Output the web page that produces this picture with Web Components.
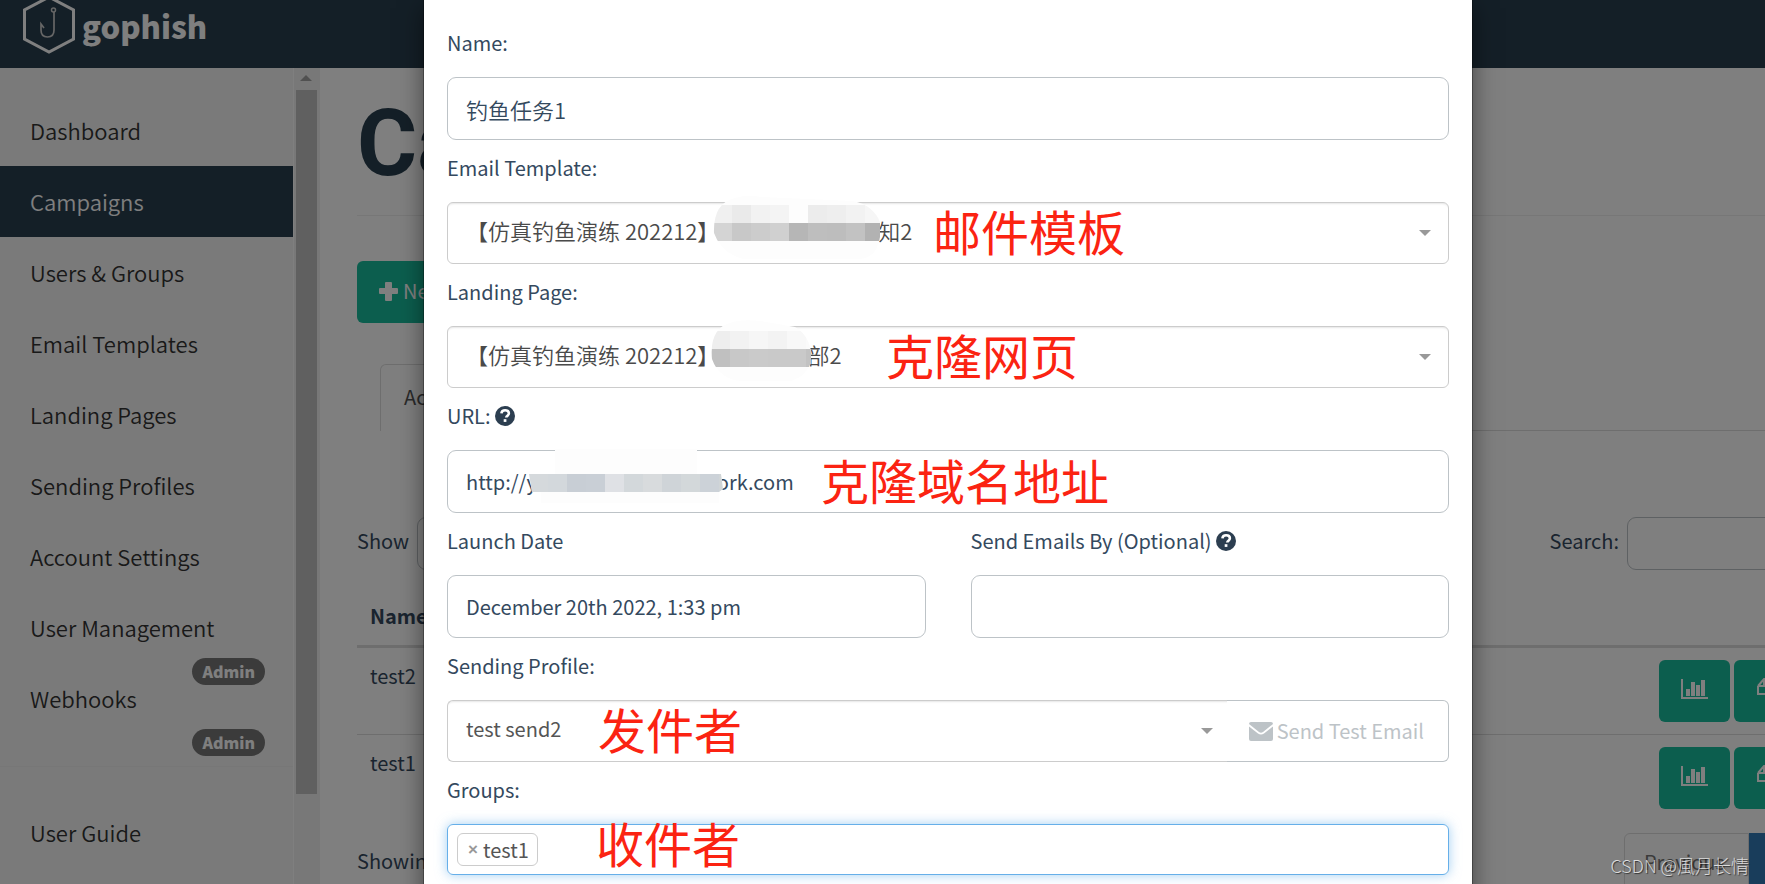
<!DOCTYPE html>
<html lang="en">
<head>
<meta charset="utf-8">
<title>Campaigns - Gophish</title>
<style>
  * {
    box-sizing: border-box;
  }
  body {
    margin: 0;
    overflow: hidden;
    height: 100vh;
    background: #fff;
    color: #34495e;
    font: 20px/32px "Noto Sans CJK SC", "Source Sans Pro", sans-serif;
    --page: calc(100vw + 131px);
  }
</style>
</head>
<body>
<gp-navbar></gp-navbar>
<gp-layout>
  <gp-sidebar slot="side"></gp-sidebar>
  <gp-campaigns></gp-campaigns>
</gp-layout>
<gp-modal>
  <gp-input label="Name:" value="钓鱼任务1" cjk></gp-input>
  <gp-select label="Email Template:" cjk value="【仿真钓鱼演练 202212】&#x3000;&#x3000;&#x3000;&#x3000;&#x3000;&#x3000;&#x3000;&#x2002; 知2">
    <gp-mosaic kind="template" style="left:266px"></gp-mosaic>
    <gp-note style="left:486px">邮件模板</gp-note>
  </gp-select>
  <gp-select label="Landing Page:" cjk value="【仿真钓鱼演练 202212】&#x3000;&#x3000;&#x3000;&#x3000;&#x2002;部2">
    <gp-mosaic kind="page" style="left:264px"></gp-mosaic>
    <gp-note style="left:439px">克隆网页</gp-note>
  </gp-select>
  <gp-input label="URL:" help value="http://y&#x3000;&#x3000;&#x3000;&#x3000;&#x3000;&#x3000;&#x3000;&#x3000;&#x3000;ork.com">
    <gp-mosaic kind="url" style="left:82px"></gp-mosaic>
    <gp-note style="left:374px">克隆域名地址</gp-note>
  </gp-input>
  <gp-columns>
    <gp-input label="Launch Date" value="December 20th 2022, 1:33 pm"></gp-input>
    <gp-input label="Send Emails By (Optional)" help value=""></gp-input>
  </gp-columns>
  <gp-select label="Sending Profile:" value="test send2" joined>
    <gp-test-button slot="after"></gp-test-button>
    <gp-note style="left:151px">发件者</gp-note>
  </gp-select>
  <gp-tags label="Groups:" value="test1">
    <gp-note style="left:149px">收件者</gp-note>
  </gp-tags>
</gp-modal>
<gp-watermark>CSDN @風月长情</gp-watermark>

<script>
  const icons = {
    help: `<svg width="20" height="20" viewBox="0 0 20 20" aria-hidden="true"><circle cx="10" cy="10" r="10" fill="#2c3e50"/><path d="M6.4 7.4C6.6 5.2 8.1 4.2 10.1 4.2c2.1 0 3.8 1.2 3.8 3.1 0 2.4-2.6 2.4-2.6 4.2" fill="none" stroke="#fff" stroke-width="2.6"/><rect x="8.7" y="13.2" width="2.7" height="2.7" fill="#fff"/></svg>`,
    plus: `<svg width="19" height="19" viewBox="0 0 19 19" aria-hidden="true"><path d="M7 0h5q1 0 1 1v5h5q1 0 1 1v4q0 1-1 1h-5v6q0 1-1 1H7q-1 0-1-1v-6H1q-1 0-1-1V7q0-1 1-1h5V1q0-1 1-1z" fill="currentColor"/></svg>`,
    chart: `<svg width="27" height="20" viewBox="0 0 27 20" aria-hidden="true"><path d="M0 0h2v18h25v2H0zM5 10h4v7H5zM10 3h4v14h-4zM15 6h4v11h-4zM20 1h4v16h-4z" fill="currentColor"/></svg>`,
    copy: `<svg width="25" height="23" viewBox="0 0 25 23" aria-hidden="true"><path d="M1 9l6-7h8v6M1 9v8h8M1 9h6V2M10 13l5-5h9v14H10zM10 14h5V8" fill="none" stroke="currentColor" stroke-width="2"/></svg>`,
    trash: `<svg width="19" height="21" viewBox="0 0 19 21" aria-hidden="true"><path d="M0 4h19M6 4V1h7v3M3 4v16h13V4M7 8v8M12 8v8" fill="none" stroke="currentColor" stroke-width="2"/></svg>`,
    mail: `<svg width="24" height="19" viewBox="0 0 24 19" aria-hidden="true"><path d="M2 0h20q2 0 2 2L14 10q-2 1.500-4 0L0 2q0-2 2-2zM0 4.500l9 7q3 2 6 0l9-7V17q0 2-2 2H2q-2 0-2-2z" fill="currentColor"/></svg>`
  };

  // attach an open root and fill it
  class Base extends HTMLElement {
    render(css, html) {
      const template = document.createElement('template');
      template.innerHTML = `<style>*{box-sizing:border-box}${css}</style>${html}`;
      this.attachShadow({ mode: 'open' }).appendChild(template.content.cloneNode(true));
    }
  }

  customElements.define('gp-navbar', class extends Base {
    connectedCallback() {
      this.render(`
        :host {
          display: flex;
          height: 68px;
          background: #293f4f;
        }
        a {
          display: flex;
          align-items: flex-start;
          gap: 7px;
          padding-left: 23px;
          color: #fff;
          text-decoration: none;
          font-weight: 900;
          font-size: 31px;
          line-height: 52px;
        }
      `, `
        <a href="#">
          <svg width="52" height="54" viewBox="0 0 52 54" aria-hidden="true">
            <path d="M26-3L50.500 10v29L26 52 1.500 39V10z" fill="none" stroke="#fff" stroke-width="3"/>
            <circle cx="30.500" cy="10" r="2" fill="none" stroke="#ccc" stroke-width="1.500"/>
            <path d="M31 12v18q0 7-6.500 7T18 30v-6l3 4" fill="none" stroke="#ccc" stroke-width="1.700"/>
          </svg>
          gophish
        </a>
      `);
    }
  });

  customElements.define('gp-layout', class extends Base {
    connectedCallback() {
      this.render(`
        :host {
          display: flex;
          width: var(--page);
          height: calc(100vh - 68px);
        }
      `, `<slot name="side"></slot><slot></slot>`);
    }
  });

  customElements.define('gp-sidebar', class extends Base {
    connectedCallback() {
      const items = ['Dashboard', 'Campaigns', 'Users & Groups', 'Email Templates', 'Landing Pages',
        'Sending Profiles', 'Account Settings', 'User Management', 'Webhooks'];
      const links = items.map(item => {
        const admin = item === 'User Management' || item === 'Webhooks';
        return `<li${item === 'Campaigns' ? ' class="active"' : ''}><a href="#">${item.replace('&', '&amp;')}</a>${admin ? '<span class="badge">Admin</span>' : ''}</li>`;
      }).join('');
      this.render(`
        :host {
          display: flex;
          flex: none;
          width: 320px;
          background: #f5f5f5;
        }
        nav {
          width: 293px;
          padding-top: 27px;
        }
        ul {
          list-style: none;
          margin: 0;
          padding: 0;
        }
        li {
          position: relative;
        }
        a {
          display: block;
          padding: 19px 30px 20px;
          color: #333;
          font-size: 22px;
          font-weight: 350;
          text-decoration: none;
        }
        .active a {
          background: #293f4f;
          color: #fff;
        }
        .badge {
          position: absolute;
          right: 28px;
          top: 66px;
          padding: 0 10px;
          border-radius: 15px;
          background: #777;
          color: #fff;
          font-size: 16px;
          line-height: 27px;
          font-weight: 900;
        }
        .more {
          margin-top: 32px;
          padding-top: 30px;
          border-top: 1px solid #eee;
        }
        .bar {
          display: flex;
          flex-direction: column;
          align-items: center;
          width: 27px;
          border-left: 1px solid #fff;
          background: #f1f1f1;
          padding: 7px 2px 0 0;
        }
        .up {
          border: 6px solid transparent;
          border-top: 0;
          border-bottom-color: #a3a3a3;
        }
        .thumb {
          width: 21px;
          height: 704px;
          margin-top: 9px;
          background: #c1c1c1;
        }
      `, `
        <nav>
          <ul>${links}</ul>
          <ul class="more"><li><a href="#">User Guide</a></li></ul>
        </nav>
        <div class="bar"><div class="up"></div><div class="thumb"></div></div>
      `);
    }
  });

  customElements.define('gp-campaigns', class extends Base {
    connectedCallback() {
      const row = name => `
        <tr>
          <td>${name}</td>
          <td><div class="actions">
            <button aria-label="View results">${icons.chart}</button>
            <button aria-label="Copy">${icons.copy}</button>
            <button class="danger" aria-label="Delete">${icons.trash}</button>
          </div></td>
        </tr>`;
      this.render(`
        :host {
          display: block;
          flex: 1;
          padding: 0 4px 0 37px;
        }
        h1 {
          margin: 0;
          padding: 21px 0 17px;
          border-bottom: 1px solid #eee;
          color: #293f4f;
          font: 700 92px/109px Roboto, sans-serif;
        }
        button {
          display: flex;
          align-items: center;
          justify-content: center;
          gap: 5px;
          height: 62px;
          border: 0;
          border-radius: 6px;
          background: #18bc9c;
          color: #fff;
          font: inherit;
        }
        .new {
          margin: 45px 0 41px;
          padding: 0 22px 2px;
        }
        .tabs {
          display: flex;
          height: 67px;
          margin-left: 23px;
          border-bottom: 1px solid #ddd;
        }
        .tabs a {
          height: 67px;
          padding: 16px 23px;
          border: 1px solid #ddd;
          border-bottom: 0;
          border-radius: 6px 6px 0 0;
          background: #fff;
          color: #555;
          text-decoration: none;
        }
        .tools {
          display: flex;
          justify-content: space-between;
          margin-top: 86px;
        }
        .tools label {
          display: flex;
          align-items: flex-start;
          gap: 8px;
          line-height: 48px;
        }
        .tools select,
        .tools input {
          height: 53px;
          border: 1px solid #bdc3c7;
          border-radius: 9px;
          background: #fff;
          font: inherit;
        }
        .tools select {
          width: 110px;
          padding: 0 12px;
        }
        .tools input {
          width: 265px;
        }
        table {
          width: 100%;
          margin-top: 17px;
          border-collapse: collapse;
        }
        th {
          height: 59px;
          padding: 12px 13px;
          border-bottom: 3px solid #ddd;
          text-align: left;
        }
        td {
          padding: 12px 12px 12px 13px;
          vertical-align: top;
          border-bottom: 1px solid #ddd;
        }
        tr:last-child td {
          border-bottom: 0;
        }
        .actions {
          display: flex;
          justify-content: flex-end;
          gap: 4px;
        }
        .actions button {
          width: 71px;
          padding: 0 0 4px;
        }
        .actions .danger {
          background: #e74c3c;
        }
        .foot {
          display: flex;
          justify-content: space-between;
          padding-top: 12px;
        }
        .foot p {
          margin: 12px 0;
        }
        .pages {
          display: flex;
        }
        .pages a {
          height: 60px;
          padding: 12px 19px;
          border: 1px solid #ddd;
          color: #777;
          text-decoration: none;
        }
        .pages a:first-child {
          width: 125px;
          border-radius: 6px 0 0 6px;
        }
        .pages .on {
          background: #337ab7;
          border-color: #337ab7;
          color: #fff;
        }
        .pages a:last-child {
          width: 92px;
        }
      `, `
        <h1>Campaigns</h1>
        <button class="new">${icons.plus} New Campaign</button>
        <div class="tabs"><a href="#">Active Campaigns</a></div>
        <div class="tools">
          <label>Show <select><option>10</option></select></label>
          <label>Search: <input type="search"></label>
        </div>
        <table>
          <thead><tr><th>Name</th><th></th></tr></thead>
          <tbody>${row('test2')}${row('test1')}</tbody>
        </table>
        <div class="foot">
          <p>Showing 1 to 2 of 2 entries</p>
          <div class="pages"><a href="#">Previous</a><a href="#" class="on">1</a><a href="#">Next</a></div>
        </div>
      `);
    }
  });

  customElements.define('gp-modal', class extends Base {
    connectedCallback() {
      this.render(`
        :host {
          position: absolute;
          top: 0;
          left: 0;
          width: var(--page);
          height: 100vh;
          overflow: hidden;
          background: rgba(0, 0, 0, .5);
        }
        .dialog {
          width: 1048px;
          min-height: 100vh;
          margin: 0 auto;
          padding: 15px 23px 40px;
          background: #fff;
          box-shadow: 0 0 0 1px rgba(0, 0, 0, .3), 0 8px 23px rgba(0, 0, 0, .5);
        }
      `, `<div class="dialog" role="dialog" aria-label="New Campaign"><slot></slot></div>`);
    }
  });

  customElements.define('gp-columns', class extends Base {
    connectedCallback() {
      this.render(`
        :host {
          display: grid;
          grid-template-columns: 1fr 1fr;
          gap: 45px;
        }
      `, `<slot></slot>`);
    }
  });

  const fieldStyle = `
    :host {
      display: block;
    }
    label {
      display: flex;
      align-items: center;
      gap: 4px;
      padding: 12px 0 18px;
    }
    .box {
      display: flex;
      position: relative;
    }
  `;

  class Field extends Base {
    label() {
      const help = this.hasAttribute('help') ? icons.help : '';
      return `<label for="control">${this.getAttribute('label')}${help}</label>`;
    }
  }

  customElements.define('gp-input', class extends Field {
    connectedCallback() {
      this.render(`${fieldStyle}
        input {
          flex: 1;
          min-width: 0;
          height: 63px;
          padding: 0 18px;
          border: 1px solid #bdc3c7;
          border-radius: 9px;
          background: #fff;
          color: #34495e;
          font: inherit;
        }
        :host([cjk]) input {
          font-size: 22px;
          font-weight: 350;
        }
      `, `
        ${this.label()}
        <div class="box"><input id="control" type="text" value="${this.getAttribute('value')}"><slot></slot></div>
      `);
    }
  });

  customElements.define('gp-select', class extends Field {
    connectedCallback() {
      this.render(`${fieldStyle}
        .pick {
          display: grid;
          flex: 1;
          align-items: center;
        }
        select,
        .caret {
          grid-area: 1 / 1;
        }
        select {
          appearance: none;
          height: 62px;
          padding: 0 18px 4px;
          border: 1px solid #ccc;
          border-radius: 6px;
          background: #fff;
          box-shadow: inset 0 3px 2px -2px rgba(0, 0, 0, .1);
          color: #555;
          font: inherit;
        }
        :host([cjk]) select {
          padding-bottom: 6px;
          color: #4a4a4a;
          font-size: 22px;
          font-weight: 350;
        }
        :host([joined]) select {
          border-right: 0;
          border-radius: 6px 0 0 6px;
        }
        .caret {
          justify-self: end;
          margin-right: 18px;
          border: 6px solid transparent;
          border-top-color: #999;
          border-bottom: 0;
          pointer-events: none;
        }
        :host([joined]) .caret {
          margin-right: 14px;
        }
      `, `
        ${this.label()}
        <div class="box">
          <div class="pick">
            <select id="control"><option>${this.getAttribute('value')}</option></select>
            <span class="caret"></span>
          </div>
          <slot name="after"></slot>
          <slot></slot>
        </div>
      `);
    }
  });

  customElements.define('gp-test-button', class extends Base {
    connectedCallback() {
      this.render(`
        :host {
          display: block;
        }
        button {
          display: flex;
          align-items: center;
          gap: 4px;
          height: 62px;
          padding: 0 24px 0 22px;
          border: 1px solid #bdc3c7;
          border-left: 0;
          border-radius: 0 6px 6px 0;
          background: #fff;
          color: #bdc3c7;
          font: inherit;
        }
      `, `<button disabled>${icons.mail} Send Test Email</button>`);
    }
  });

  customElements.define('gp-tags', class extends Field {
    connectedCallback() {
      this.render(`${fieldStyle}
        .tags {
          display: flex;
          flex: 1;
          align-items: center;
          gap: 8px;
          height: 51px;
          padding: 0 9px;
          border: 1px solid #66afe9;
          border-radius: 6px;
          box-shadow: 0 0 12px rgba(102, 175, 233, .6);
        }
        .tag {
          display: flex;
          align-items: center;
          gap: 5px;
          height: 33px;
          padding: 0 8px 0 10px;
          border: 1px solid #ccc;
          border-radius: 6px;
          color: #555;
        }
        button {
          padding: 0;
          border: 0;
          background: none;
          color: #999;
          font: 700 17px/32px "Liberation Sans", sans-serif;
        }
        input {
          flex: 1;
          border: 0;
          outline: 0;
          font: inherit;
        }
        ::slotted(gp-note) {
          bottom: 12px;
        }
      `, `
        ${this.label()}
        <div class="box">
          <div class="tags">
            <span class="tag"><button aria-label="Remove">×</button>${this.getAttribute('value')}</span>
            <input id="control" type="text">
          </div>
          <slot></slot>
        </div>
      `);
    }
  });

  // blurred-out part of a value
  customElements.define('gp-mosaic', class extends Base {
    connectedCallback() {
      const kinds = {
        template: {
          width: 170,
          blob: 'M1 38Q0 8 22 3 35-1 48 2L140 6Q160 10 167 27V42Q164 62 148 64H30Q8 58 1 38z',
          light: ['#f0f0f0', '#eaeaea', '#f2f2f2', '#f4f4f4', '#fdfdfd', '#ececec', '#eee', '#f2f2f2', '#f6f6f6'],
          dark: ['#d4d4d4', '#c8c8c8', '#ccc', '#d0d0d0', '#b6b6b6', '#bebebe', '#bdbdbd', '#c2c2c2', '#b2b2b2'],
          top: 28
        },
        page: {
          width: 102,
          blob: 'M1 40Q-2 8 22 3 32 0 50 2L84 8Q98 16 100 34V44Q94 58 80 62H30Q8 60 1 40z',
          light: ['#eee', '#f2f2f2', '#f6f6f6', '#f3f3f3', '#f8f8f8', '#fafafa'],
          dark: ['#c0c0c0', '#c8c8c8', '#cacaca', '#c9c9c9', '#c9c9c9', '#c2c2c2'],
          top: 30
        },
        url: {
          width: 195,
          blob: 'M26 6H168V31H192L194 46L190 49V60H12V49H3L0 31H26z',
          light: [],
          dark: ['#d5d9dc', '#d3d8dc', '#c8ced5', '#c9cfd6', '#dfe1e5', '#d3d8db', '#d8dbdd', '#cfd4d8', '#d3d8da', '#ccd2d8', '#d0d5d7'],
          top: 31
        }
      };
      const kind = kinds[this.getAttribute('kind')];
      const cells = (list, y) => list.map((c, i) => `<rect x="${i * 19}" y="${y}" width="19" height="18" fill="${c}"/>`).join('');
      const id = this.getAttribute('kind');
      this.render(`
        :host {
          position: absolute;
          top: -7px;
        }
        svg {
          display: block;
        }
      `, `
        <svg width="${kind.width}" height="68" viewBox="0 0 ${kind.width} 68" aria-hidden="true">
          <clipPath id="${id}"><path d="${kind.blob}"/></clipPath>
          <g clip-path="url(#${id})">
            <rect width="200" height="68" fill="#fdfdfd"/>
            ${cells(kind.light, kind.top - 18)}
            ${cells(kind.dark, kind.top)}
          </g>
        </svg>
      `);
    }
  });

  customElements.define('gp-note', class extends Base {
    connectedCallback() {
      this.render(`
        :host {
          display: flex;
          align-items: center;
          position: absolute;
          top: -3px;
          bottom: 3px;
          color: #fb2312;
          font-size: 48px;
          white-space: nowrap;
          pointer-events: none;
        }
      `, `<slot></slot>`);
    }
  });

  customElements.define('gp-watermark', class extends Base {
    connectedCallback() {
      this.render(`
        :host {
          position: absolute;
          right: 16px;
          bottom: 3px;
          color: rgba(255, 255, 255, .75);
          font-size: 18px;
          font-weight: 300;
          text-shadow: 1px 1px 1px rgba(0, 0, 0, .6);
        }
      `, `<slot></slot>`);
    }
  });
</script>
</body>
</html>
